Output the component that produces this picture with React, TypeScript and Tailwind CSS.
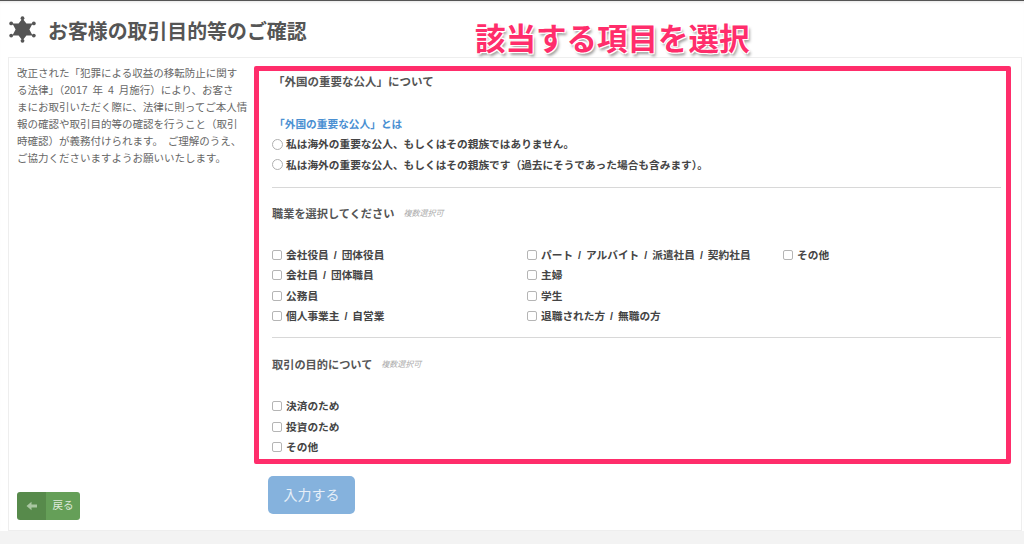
import React from "react";

const jp = "font-['Liberation_Sans','Noto_Sans_CJK_JP',sans-serif]";

function Check({ label }: { label: string }) {
  return (
    <label className="flex items-center h-[20.3px] text-[10.7px] font-bold text-[#444] [word-spacing:2px]">
      <span className="w-[10px] h-[10px] mr-[4px] rounded-[2px] border border-[#b5b5b5] bg-white shrink-0" />
      <span className="whitespace-nowrap">{label}</span>
    </label>
  );
}

function Radio({ label }: { label: string }) {
  return (
    <label className="flex items-center h-[20.5px] text-[10.7px] font-bold text-[#444]">
      <span className="w-[11px] h-[11px] mr-[3px] rounded-full border border-[#b0b0b0] bg-white shrink-0" />
      <span className="whitespace-nowrap">{label}</span>
    </label>
  );
}

function Heading({ title, note }: { title: string; note: string }) {
  return (
    <div className="flex items-center h-[16px] text-[#555]">
      <span className="text-[11.2px] font-bold">{title}</span>
      <span className="ml-[9px] text-[8px] italic text-[#aaa]">{note}</span>
    </div>
  );
}

export default function App() {
  return (
    <div className={`${jp} w-[1024px] h-[544px] bg-[#f3f3f3] overflow-hidden flex flex-col`}>
      <div className="h-[1px] bg-[#555] shrink-0" />
      <div className="bg-white h-[530px] shrink-0 flex flex-col shadow-[inset_0_3px_3px_-2px_#e5e5e5]">
        <header className="relative h-[56px] shrink-0 flex items-center pl-[9px] pt-[5px]">
          <svg width="27" height="27" viewBox="0 0 27 27" className="shrink-0 mt-[-5px]">
            <g fill="#555">
              <polygon points="13.5,2.5 17.4,7.4 23.6,7.6 20.4,13.5 23.6,19.4 17.4,19.6 13.5,24.5 9.6,19.6 3.4,19.4 6.6,13.5 3.4,7.6 9.6,7.4" />
              <circle cx="13.5" cy="2.2" r="1.9" />
              <circle cx="13.5" cy="24.8" r="1.9" />
              <circle cx="2.2" cy="7.4" r="1.9" />
              <circle cx="24.8" cy="7.4" r="1.9" />
              <circle cx="2.2" cy="19.6" r="1.9" />
              <circle cx="24.8" cy="19.6" r="1.9" />
            </g>
          </svg>
          <h1 className="ml-[12px] mt-[3px] text-[19.9px] font-bold text-[#555] whitespace-nowrap leading-none">
            お客様の取引目的等のご確認
          </h1>
          <div className="absolute left-[475px] top-[18px] text-[30.5px] leading-[40px] font-bold text-[#ff2d6b] whitespace-nowrap [text-shadow:0_0_2px_#fff,1px_1px_0_#fff,-1px_-1px_0_#fff,1px_-1px_0_#fff,-1px_1px_0_#fff,2px_3px_3px_#999]">
            該当する項目を選択
          </div>
        </header>

        <main className="ml-[8px] w-[1014px] h-[474px] border border-[#eeeeee] flex">
          <aside className="w-[245px] shrink-0 pl-[8px] pt-[7px] pb-[10px] flex flex-col justify-between">
            <p className="text-[10.5px] leading-[17px] text-[#666] whitespace-nowrap [word-spacing:2px]">
              改正された「犯罪による収益の移転防止に関す<br />
              る法律」（2017 年 4 月施行）により、お客さ<br />
              まにお取引いただく際に、法律に則ってご本人情<br />
              報の確認や取引目的等の確認を行うこと（取引<br />
              時確認）が義務付けられます。 ご理解のうえ、<br />
              ご協力くださいますようお願いいたします。
            </p>
            <button className="w-[63px] h-[28px] flex rounded-[3px] overflow-hidden text-[10.6px] text-[#dfe9db]">
              <span className="w-[29px] h-full bg-[#578a4b] flex items-center justify-center">
                <svg width="12" height="10" viewBox="0 0 12 10">
                  <path d="M0.5 5 L5.5 0.8 V3.4 H11 V6.6 H5.5 V9.2 Z" fill="#a9c6a1" />
                </svg>
              </span>
              <span className="flex-1 h-full bg-[#659f58] flex items-center justify-center">戻る</span>
            </button>
          </aside>

          <div className="flex-1 pt-[8px]">
            <section className="w-[757px] h-[398px] border-[5.5px] border-[#ff2d6b] rounded-[2px] pl-[13px] pr-[5px] pt-[4px]">
              <p className="h-[16px] flex items-center text-[11.5px] font-bold text-[#555] ml-[1px]">
                「外国の重要な公人」について
              </p>
              <p className="mt-[25.5px] h-[16px] flex items-center text-[10.7px] font-bold text-[#4a90d2] ml-[2px]">
                「外国の重要な公人」とは
              </p>
              <div className="mt-[1.5px]">
                <Radio label="私は海外の重要な公人、もしくはその親族ではありません。" />
                <Radio label="私は海外の重要な公人、もしくはその親族です（過去にそうであった場合も含みます）。" />
              </div>
              <hr className="mt-[12px] border-t border-[#d8d8d8]" />
              <div className="mt-[18px]">
                <Heading title="職業を選択してください" note="複数選択可" />
              </div>
              <div className="mt-[23px] grid grid-cols-[255px_256px_1fr]">
                <Check label="会社役員 / 団体役員" />
                <Check label="パート / アルバイト / 派遣社員 / 契約社員" />
                <Check label="その他" />
                <Check label="会社員 / 団体職員" />
                <Check label="主婦" />
                <span />
                <Check label="公務員" />
                <Check label="学生" />
                <span />
                <Check label="個人事業主 / 自営業" />
                <Check label="退職された方 / 無職の方" />
                <span />
              </div>
              <hr className="mt-[11px] border-t border-[#d8d8d8]" />
              <div className="mt-[19px]">
                <Heading title="取引の目的について" note="複数選択可" />
              </div>
              <div className="mt-[23px]">
                <Check label="決済のため" />
                <Check label="投資のため" />
                <Check label="その他" />
              </div>
            </section>
            <button className="mt-[12px] ml-[14px] w-[87px] h-[38px] rounded-[5px] bg-[#85b2dd] text-[14px] text-[#e6eff8]">
              入力する
            </button>
          </div>
        </main>
      </div>
    </div>
  );
}
